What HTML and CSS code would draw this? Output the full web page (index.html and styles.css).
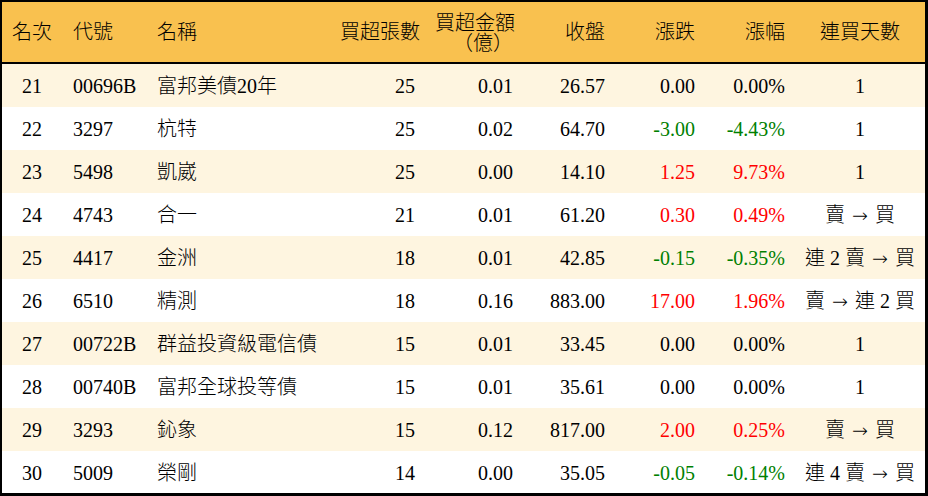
FILE: index.html
```html
<!DOCTYPE html>
<html lang="zh-Hant">
<head>
<meta charset="utf-8">
<title>買超排行</title>
<link rel="stylesheet" href="styles.css">
</head>
<body>
<div class="frame">
<table class="rank">
<colgroup>
<col class="w1"><col class="w2"><col class="w3"><col class="w4"><col class="w5"><col class="w6"><col class="w7"><col class="w8"><col class="w9">
</colgroup>
<thead>
<tr>
<th class="c">名次</th>
<th class="l">代號</th>
<th class="l name">名稱</th>
<th class="r">買超張數</th>
<th class="r two">買超金額<br>（億）</th>
<th class="r">收盤</th>
<th class="r">漲跌</th>
<th class="r">漲幅</th>
<th class="c">連買天數</th>
</tr>
</thead>
<tbody>
<tr class="odd"><td class="c">21</td><td class="l">00696B</td><td class="l name">富邦美債20年</td><td class="r">25</td><td class="r">0.01</td><td class="r">26.57</td><td class="r">0.00</td><td class="r">0.00%</td><td class="c">1</td></tr>
<tr><td class="c">22</td><td class="l">3297</td><td class="l name">杭特</td><td class="r">25</td><td class="r">0.02</td><td class="r">64.70</td><td class="r dn">-3.00</td><td class="r dn">-4.43%</td><td class="c">1</td></tr>
<tr class="odd"><td class="c">23</td><td class="l">5498</td><td class="l name">凱崴</td><td class="r">25</td><td class="r">0.00</td><td class="r">14.10</td><td class="r up">1.25</td><td class="r up">9.73%</td><td class="c">1</td></tr>
<tr><td class="c">24</td><td class="l">4743</td><td class="l name">合一</td><td class="r">21</td><td class="r">0.01</td><td class="r">61.20</td><td class="r up">0.30</td><td class="r up">0.49%</td><td class="c">賣 <span class="arrow">→</span> 買</td></tr>
<tr class="odd"><td class="c">25</td><td class="l">4417</td><td class="l name">金洲</td><td class="r">18</td><td class="r">0.01</td><td class="r">42.85</td><td class="r dn">-0.15</td><td class="r dn">-0.35%</td><td class="c">連 2 賣 <span class="arrow">→</span> 買</td></tr>
<tr><td class="c">26</td><td class="l">6510</td><td class="l name">精測</td><td class="r">18</td><td class="r">0.16</td><td class="r">883.00</td><td class="r up">17.00</td><td class="r up">1.96%</td><td class="c">賣 <span class="arrow">→</span> 連 2 買</td></tr>
<tr class="odd"><td class="c">27</td><td class="l">00722B</td><td class="l name">群益投資級電信債</td><td class="r">15</td><td class="r">0.01</td><td class="r">33.45</td><td class="r">0.00</td><td class="r">0.00%</td><td class="c">1</td></tr>
<tr><td class="c">28</td><td class="l">00740B</td><td class="l name">富邦全球投等債</td><td class="r">15</td><td class="r">0.01</td><td class="r">35.61</td><td class="r">0.00</td><td class="r">0.00%</td><td class="c">1</td></tr>
<tr class="odd"><td class="c">29</td><td class="l">3293</td><td class="l name">鈊象</td><td class="r">15</td><td class="r">0.12</td><td class="r">817.00</td><td class="r up">2.00</td><td class="r up">0.25%</td><td class="c">賣 <span class="arrow">→</span> 買</td></tr>
<tr><td class="c">30</td><td class="l">5009</td><td class="l name">榮剛</td><td class="r">14</td><td class="r">0.00</td><td class="r">35.05</td><td class="r dn">-0.05</td><td class="r dn">-0.14%</td><td class="c">連 4 賣 <span class="arrow">→</span> 買</td></tr>
</tbody>
</table>
</div>
</body>
</html>
```
FILE: styles.css
```css
html, body {
  margin: 0;
  padding: 0;
  background: #ffffff;
}
.frame {
  width: 928px;
  height: 496px;
  box-sizing: border-box;
  border-style: solid;
  border-color: #000;
  border-width: 2px 3px 3px 2px;
  overflow: hidden;
}
.rank {
  width: 923px;
  border-collapse: collapse;
  table-layout: fixed;
  font-family: "Liberation Serif", "Noto Sans CJK TC", serif;
  font-size: 20px;
  font-weight: 300;
  color: #000;
}
.w1 { width: 60px; }
.w2 { width: 85px; }
.w3 { width: 183px; }
.w4 { width: 95px; }
.w5 { width: 98px; }
.w6 { width: 92px; }
.w7 { width: 90px; }
.w8 { width: 90px; }
.w9 { width: 130px; }
.rank th {
  background: #f9c14f;
  height: 59px;
  padding: 0 10px;
  font-weight: 300;
  line-height: 21px;
  border-bottom: 2px solid #000;
  white-space: nowrap;
}
.rank th.two {
  line-height: 20px;
  padding-top: 1px;
}
.rank td {
  height: 43px;
  padding: 0 10px;
  line-height: 22px;
  white-space: nowrap;
}
.rank tr.odd td {
  background: #fef5e0;
}
.rank .c { text-align: center; padding: 0; }
.rank .l { text-align: left; padding-left: 11px; padding-right: 0; }
.rank .name { padding-left: 10px; }
.rank .r { text-align: right; }
.rank .up { color: #ff0000; }
.rank .dn { color: #008000; }
.arrow {
  font-family: "DejaVu Sans", sans-serif;
  font-size: 19px;
  margin: 0 2px;
}
```
